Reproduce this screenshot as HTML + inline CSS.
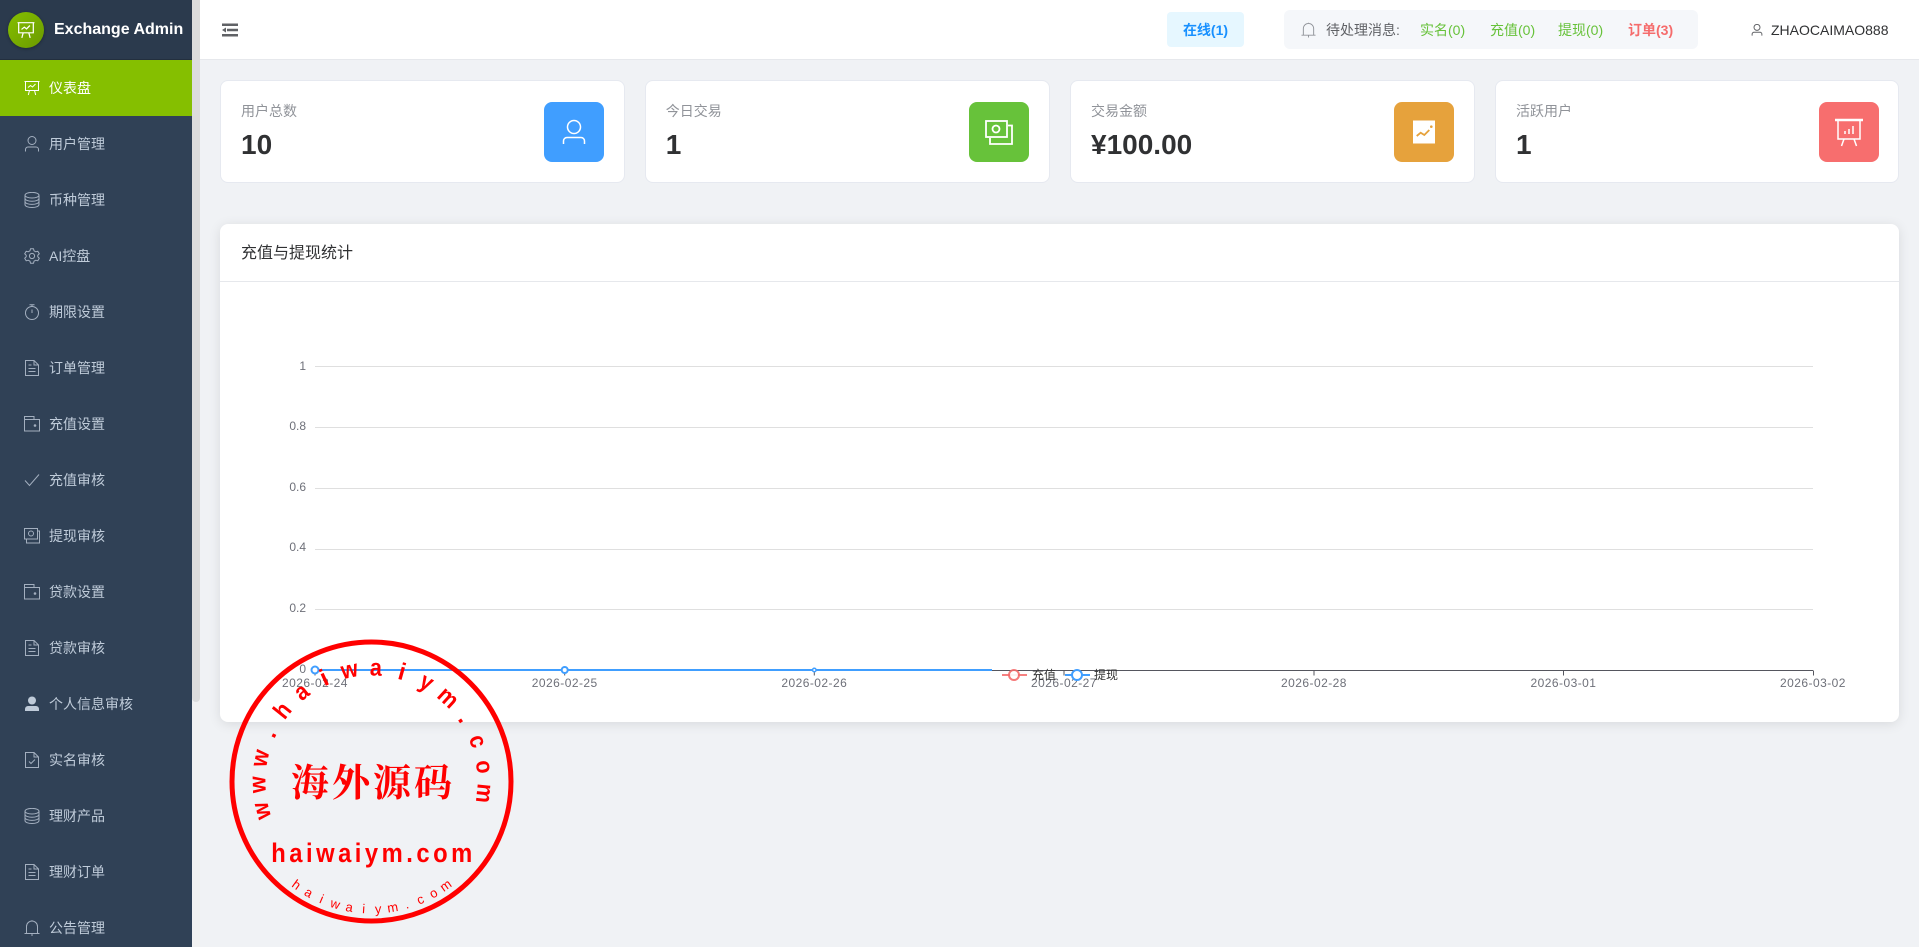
<!DOCTYPE html>
<html lang="zh"><head><meta charset="utf-8"><title>Exchange Admin</title>
<style>
*{box-sizing:border-box}
html,body{margin:0;padding:0;width:1919px;height:947px;overflow:hidden;background:#f0f2f5;font-family:"Liberation Sans","Noto Sans CJK SC",sans-serif;font-size:14px}
.abs{position:absolute}
#side{position:absolute;left:0;top:0;width:192px;height:947px;background:#304156;overflow:hidden}
#logo{height:60px;background:#2b3a4d;position:relative;border-bottom:1px solid #232f3e}
#logo .c{position:absolute;left:8px;top:12px;width:36px;height:36px;border-radius:50%;background:linear-gradient(135deg,#85bf00,#6b9a00);box-shadow:0 1px 3px rgba(0,0,0,.3)}
#logo .c svg{position:absolute;left:8px;top:9px}
#logo b{position:absolute;left:54px;top:0;line-height:60px;color:#fff;font-size:16px;white-space:nowrap}
.it{height:56px;position:relative;color:#bfcbd9;line-height:56px;white-space:nowrap}
.it span{position:absolute;left:49px;top:0}
.it svg{position:absolute;left:24px;top:20px}
.it.on{background:#85bf00;color:#fff}
svg.i{fill:none;stroke:currentColor;stroke-width:1;color:#a3afbf}
.on svg.i{color:#fff}
#sb{position:absolute;left:192px;top:0;width:8px;height:947px;background:#f1f1f1}
#sb i{display:block;width:8px;height:702px;background:#dcdcdc;border-radius:0 0 4px 4px}
#head{position:absolute;left:200px;top:0;width:1719px;height:60px;background:#fff;border-bottom:1px solid #e6e8ec}
.card{position:absolute;top:80px;height:103px;background:#fff;border:1px solid #e6e9f0;border-radius:8px}
.card .l{position:absolute;left:20px;top:20px;line-height:20px;color:#909399;font-size:14px}
.card .v{position:absolute;left:20px;top:48px;line-height:32px;color:#303133;font-size:28px;font-weight:700}
.card .b{position:absolute;right:20px;top:21px;width:60px;height:60px;border-radius:8px}
.card .b svg{position:absolute;left:16px;top:16px}
#chart{position:absolute;left:220px;top:224px;width:1679px;height:498px;background:#fff;border-radius:8px;box-shadow:0 2px 12px rgba(0,0,0,.1)}
#chart .t{height:58px;line-height:60px;padding-left:21px;border-bottom:1px solid #e6e8ec;font-size:16px;color:#303133}
.n{position:absolute;top:0;line-height:60px;white-space:nowrap}
</style></head><body>
<div id="side">
<div id="logo"><div class="c"><svg width="20" height="18" viewBox="0 0 16 16" fill="none" stroke="#fff" stroke-width="1.100"><path d="M.5 1.500h15M1.500 1.500v9h13v-9M5.500 10.500l-1.200 4.500M10.500 10.500l1.200 4.500M4 7.500l2.500-2 2 1.500 3-3"/></svg></div><b>Exchange Admin</b></div>
<div class="it on"><svg class="i" width="16" height="16" viewBox="0 0 16 16"><path d="M.5 1.500h15M1.500 1.500v9h13v-9M5.500 10.500l-1.200 4.500M10.500 10.500l1.200 4.500M4 7.500l2.500-2 2 1.500 3-3"/></svg><span>仪表盘</span></div>
<div class="it"><svg class="i" width="16" height="16" viewBox="0 0 16 16"><circle cx="8" cy="4.500" r="4"/><path d="M1.500 15.500v-2a2.500 2.500 0 0 1 2.500-2.500h8a2.500 2.500 0 0 1 2.500 2.500v2"/></svg><span>用户管理</span></div>
<div class="it"><svg class="i" width="16" height="16" viewBox="0 0 16 16"><ellipse cx="8" cy="3.200" rx="7" ry="2.800"/><path d="M1 3.200v9.400c0 1.600 3 2.900 7 2.900s7-1.300 7-2.900V3.200M1 6.400c0 1.600 3 2.900 7 2.900s7-1.300 7-2.900M1 9.500c0 1.600 3 2.900 7 2.900s7-1.300 7-2.900"/></svg><span>币种管理</span></div>
<div class="it"><svg class="i" width="16" height="16" viewBox="0 0 16 16" stroke-linejoin="round"><circle cx="8" cy="8" r="2.600"/><path d="M6.500.8H9.500L10 2.800 11.800 3.800 13.800 3.200 15.300 5.800 13.800 7.200V8.800L15.300 10.200 13.800 12.800 11.800 12.200 10 13.200 9.500 15.200H6.500L6 13.200 4.200 12.200 2.200 12.800 .7 10.200 2.200 8.800V7.200L.7 5.800 2.200 3.200 4.200 3.800 6 2.800Z"/></svg><span>AI控盘</span></div>
<div class="it"><svg class="i" width="16" height="16" viewBox="0 0 16 16"><circle cx="8" cy="9" r="6.500"/><path d="M5.500.7h5M8 .7v1.800M8 5.500v3.500"/></svg><span>期限设置</span></div>
<div class="it"><svg class="i" width="16" height="16" viewBox="0 0 16 16"><path d="M1.500.5h8.500l4.500 4.500v10.500h-13zM10 .5V5h4.500M4.500 5h3M4.500 8.500h7M4.500 11.500h7"/></svg><span>订单管理</span></div>
<div class="it"><svg class="i" width="16" height="16" viewBox="0 0 16 16"><path d="M.5 15V.5h9.500v3h5.500V15zM.5 3.500h9.500"/><circle cx="11" cy="9.500" r=".8" fill="currentColor"/></svg><span>充值设置</span></div>
<div class="it"><svg class="i" width="16" height="16" viewBox="0 0 16 16"><path d="M1 8.500l4.500 5L15 2.500"/></svg><span>充值审核</span></div>
<div class="it"><svg class="i" width="16" height="16" viewBox="0 0 16 16"><rect x=".5" y=".5" width="13" height="10.500"/><circle cx="7" cy="5.500" r="2.500"/><path d="M14 3h1.500v12h-13v-3.500"/></svg><span>提现审核</span></div>
<div class="it"><svg class="i" width="16" height="16" viewBox="0 0 16 16"><path d="M.5 15V.5h9.500v3h5.500V15zM.5 3.500h9.500"/><circle cx="11" cy="9.500" r=".8" fill="currentColor"/></svg><span>贷款设置</span></div>
<div class="it"><svg class="i" width="16" height="16" viewBox="0 0 16 16"><path d="M1.500.5h8.500l4.500 4.500v10.500h-13zM10 .5V5h4.500M4.500 5h3M4.500 8.500h7M4.500 11.500h7"/></svg><span>贷款审核</span></div>
<div class="it"><svg class="i" width="16" height="16" viewBox="0 0 16 16" style="color:#bfcbd9"><circle cx="8" cy="4.500" r="4" fill="currentColor" stroke="none"/><path d="M1 15v-2a3 3 0 0 1 3-3h8a3 3 0 0 1 3 3v2z" fill="currentColor" stroke="none"/></svg><span>个人信息审核</span></div>
<div class="it"><svg class="i" width="16" height="16" viewBox="0 0 16 16"><path d="M1.500.5h8.500l4.500 4.500v10.500h-13zM10 .5V5h4.500M5 9.500l2 2 4-4"/></svg><span>实名审核</span></div>
<div class="it"><svg class="i" width="16" height="16" viewBox="0 0 16 16"><ellipse cx="8" cy="3.200" rx="7" ry="2.800"/><path d="M1 3.200v9.400c0 1.600 3 2.900 7 2.900s7-1.300 7-2.900V3.200M1 6.400c0 1.600 3 2.900 7 2.900s7-1.300 7-2.900M1 9.500c0 1.600 3 2.900 7 2.900s7-1.300 7-2.900"/></svg><span>理财产品</span></div>
<div class="it"><svg class="i" width="16" height="16" viewBox="0 0 16 16"><path d="M1.500.5h8.500l4.500 4.500v10.500h-13zM10 .5V5h4.500M4.500 5h3M4.500 8.500h7M4.500 11.500h7"/></svg><span>理财订单</span></div>
<div class="it"><svg class="i" width="16" height="16" viewBox="0 0 16 16"><path d="M2.500 13.500V6.500a5.500 5.500 0 0 1 11 0v7M.5 13.500h15M8 13.500V16M8 1V.2"/></svg><span>公告管理</span></div>
</div>
<div id="sb"><i></i></div>

<div id="head">
<svg class="abs" style="left:22px;top:23px" width="16" height="14" viewBox="0 0 16 14" fill="#606266"><path d="M0 .5h16V3H0zM5 5.750h11v2.500H5zM0 11h16v2.500H0zM0 7L4 4.500v5z"/></svg>
<div class="abs" style="left:967px;top:12px;width:77px;height:35px;background:#e6f7ff;border-radius:4px;color:#1890ff;font-weight:700;text-align:center;line-height:36px">在线(1)</div>
<div class="abs" style="left:1084px;top:10px;width:414px;height:39px;background:#f5f7fa;border-radius:6px"></div>
<svg class="abs" style="left:1101px;top:22px;color:#909399" width="15" height="16" viewBox="0 0 16 16" fill="none" stroke="currentColor"><path d="M2.500 13.500V6.500a5.500 5.500 0 0 1 11 0v7M.5 13.500h15M8 13.500V16M8 1V.2"/></svg>
<span class="n" style="left:1126px;color:#606266">待处理消息:</span>
<span class="n" style="left:1220px;color:#67c23a">实名(0)</span>
<span class="n" style="left:1290px;color:#67c23a">充值(0)</span>
<span class="n" style="left:1358px;color:#67c23a">提现(0)</span>
<span class="n" style="left:1428px;color:#f56c6c;font-weight:700">订单(3)</span>
<svg class="abs" style="left:1551px;top:24px;color:#606266" width="12" height="12" viewBox="0 0 16 16" fill="none" stroke="currentColor" stroke-width="1.300"><circle cx="8" cy="4.500" r="4"/><path d="M1.500 15.500v-2a2.500 2.500 0 0 1 2.500-2.500h8a2.500 2.500 0 0 1 2.500 2.500v2"/></svg>
<span class="n" style="left:1571px;color:#303133">ZHAOCAIMAO888</span>
</div>

<div class="card" style="left:220px;width:404.75px"><div class="l">用户总数</div><div class="v">10</div><div class="b" style="background:#409eff"><svg width="28" height="28" viewBox="0 0 28 28" fill="none" stroke="#fff" stroke-width="1.500"><circle cx="14" cy="9" r="6.500"/><path d="M3.500 26v-3a3.500 3.500 0 0 1 3.500-3.500h14a3.500 3.500 0 0 1 3.500 3.500v3"/></svg></div></div>
<div class="card" style="left:644.75px;width:404.75px"><div class="l">今日交易</div><div class="v">1</div><div class="b" style="background:#67c23a"><svg width="28" height="28" viewBox="0 0 28 28" fill="none" stroke="#fff" stroke-width="1.800"><rect x="1" y="3" width="21" height="16"/><circle cx="11" cy="11" r="3.500"/><path d="M23 7.500h4V26H5v-6"/></svg></div></div>
<div class="card" style="left:1070px;width:405px"><div class="l">交易金额</div><div class="v">¥100.00</div><div class="b" style="background:#e6a23c"><svg width="28" height="28" viewBox="0 0 28 28"><rect x="3" y="2.500" width="22" height="23" fill="#fff"/><path d="M6.700 18l4-3.300 3.600 2.300 5-5" fill="none" stroke="#e6a23c" stroke-width="1.800"/><circle cx="21.300" cy="8.700" r="1.300" fill="#e6a23c"/></svg></div></div>
<div class="card" style="left:1495px;width:404px"><div class="l">活跃用户</div><div class="v">1</div><div class="b" style="background:#f76e6e;right:19px"><svg width="30" height="30" viewBox="0 0 30 30" fill="none" stroke="#fff" stroke-width="1.500" style="left:15px;top:16px"><path d="M1 2h28" stroke-width="2.500"/><path d="M4 2v19h22V2M10 21l-2.500 7M20 21l2.500 7M11 16v-3M15 16v-5M19 16V8"/></svg></div></div>

<div id="chart"><div class="t">充值与提现统计</div></div>

<svg class="abs" style="left:0;top:0" width="1919" height="947" font-family="'Liberation Sans','Noto Sans CJK SC',sans-serif">
<g stroke="#dfdfdf" fill="none" stroke-width="1"><path d="M315 366.500H1813M315 427.500H1813M315 488.500H1813M315 549.500H1813M315 609.500H1813"/></g>
<path d="M315 670.500H1813" stroke="#55565e" stroke-width="1"/>
<path d="M315 670.500v5M564.700 670.500v5M814.300 670.500v5M1064 670.500v5M1314 670.500v5M1563.500 670.500v5M1813.500 670.500v5" stroke="#55565e" stroke-width="1" fill="none"/>
<path d="M315 670H992" stroke="#409eff" stroke-width="2"/>
<circle cx="315" cy="670" r="3.500" fill="#fff" stroke="#409eff" stroke-width="2"/>
<circle cx="564.700" cy="670" r="3" fill="#fff" stroke="#409eff" stroke-width="2"/>
<circle cx="814.300" cy="670" r="1.800" fill="#fff" stroke="#409eff" stroke-width="1.500"/>
<g font-size="12" fill="#6e7079" text-anchor="end"><text x="306" y="370">1</text><text x="306" y="430">0.8</text><text x="306" y="491">0.6</text><text x="306" y="551">0.4</text><text x="306" y="612">0.2</text><text x="306" y="673">0</text></g>
<g font-size="12" fill="#6e7079" text-anchor="middle" letter-spacing=".45"><text x="315" y="687">2026-02-24</text><text x="564.700" y="687">2026-02-25</text><text x="814.300" y="687">2026-02-26</text><text x="1064" y="687">2026-02-27</text><text x="1314" y="687">2026-02-28</text><text x="1563.500" y="687">2026-03-01</text><text x="1813" y="687">2026-03-02</text></g>
<path d="M1002 675h25" stroke="#f56c6c" stroke-width="2" opacity=".85"/><circle cx="1014" cy="675" r="5" fill="#fff" stroke="#f56c6c" stroke-width="2" opacity=".9"/>
<path d="M1065 675h25" stroke="#409eff" stroke-width="2"/><circle cx="1077" cy="675" r="5" fill="#fff" stroke="#409eff" stroke-width="2"/>
<text x="1032" y="679" font-size="12" fill="#333">充值</text><text x="1094" y="679" font-size="12" fill="#333">提现</text>

<circle cx="371.500" cy="781.500" r="139.500" fill="none" stroke="#f00" stroke-width="5"/>
<g fill="#f00" font-size="24" font-weight="700" text-anchor="middle">
<text transform="translate(371.500 781.500) rotate(-105) translate(0 -106) scale(.9 1)">w</text>
<text transform="translate(371.500 781.500) rotate(-91.600) translate(0 -106) scale(.9 1)">w</text>
<text transform="translate(371.500 781.500) rotate(-78.200) translate(0 -106) scale(.9 1)">w</text>
<text transform="translate(371.500 781.500) rotate(-64.800) translate(0 -106)">.</text>
<text transform="translate(371.500 781.500) rotate(-51.400) translate(0 -106) scale(.9 1)">h</text>
<text transform="translate(371.500 781.500) rotate(-38) translate(0 -106) scale(.9 1)">a</text>
<text transform="translate(371.500 781.500) rotate(-24.600) translate(0 -106)">i</text>
<text transform="translate(371.500 781.500) rotate(-11.200) translate(0 -106) scale(.9 1)">w</text>
<text transform="translate(371.500 781.500) rotate(2.200) translate(0 -106) scale(.9 1)">a</text>
<text transform="translate(371.500 781.500) rotate(15.600) translate(0 -106)">i</text>
<text transform="translate(371.500 781.500) rotate(29) translate(0 -106) scale(.9 1)">y</text>
<text transform="translate(371.500 781.500) rotate(42.400) translate(0 -106) scale(.9 1)">m</text>
<text transform="translate(371.500 781.500) rotate(55.800) translate(0 -106)">.</text>
<text transform="translate(371.500 781.500) rotate(69.200) translate(0 -106) scale(.9 1)">c</text>
<text transform="translate(371.500 781.500) rotate(82.600) translate(0 -106) scale(.9 1)">o</text>
<text transform="translate(371.500 781.500) rotate(96) translate(0 -106) scale(.9 1)">m</text>
</g>
<text x="373" y="796" fill="#f00" font-size="38" font-weight="700" text-anchor="middle" letter-spacing="3" font-family="'Noto Serif CJK SC',serif">海外源码</text>
<text transform="translate(373.500 862) scale(.88 1)" fill="#f00" font-size="27" font-weight="700" text-anchor="middle" letter-spacing="4" font-family="'Liberation Sans',sans-serif">haiwaiym.com</text>
<g fill="#f00" font-size="13" text-anchor="middle" font-family="'Liberation Sans',sans-serif">
<text transform="translate(371.500 781.500) rotate(36) translate(0 132)">h</text>
<text transform="translate(371.500 781.500) rotate(29.500) translate(0 132)">a</text>
<text transform="translate(371.500 781.500) rotate(23) translate(0 132)">i</text>
<text transform="translate(371.500 781.500) rotate(16.500) translate(0 132)">w</text>
<text transform="translate(371.500 781.500) rotate(10) translate(0 132)">a</text>
<text transform="translate(371.500 781.500) rotate(3.500) translate(0 132)">i</text>
<text transform="translate(371.500 781.500) rotate(-3) translate(0 132)">y</text>
<text transform="translate(371.500 781.500) rotate(-9.500) translate(0 132)">m</text>
<text transform="translate(371.500 781.500) rotate(-16) translate(0 132)">.</text>
<text transform="translate(371.500 781.500) rotate(-22.500) translate(0 132)">c</text>
<text transform="translate(371.500 781.500) rotate(-29) translate(0 132)">o</text>
<text transform="translate(371.500 781.500) rotate(-35.500) translate(0 132)">m</text>
</g>
</svg>
</body></html>
